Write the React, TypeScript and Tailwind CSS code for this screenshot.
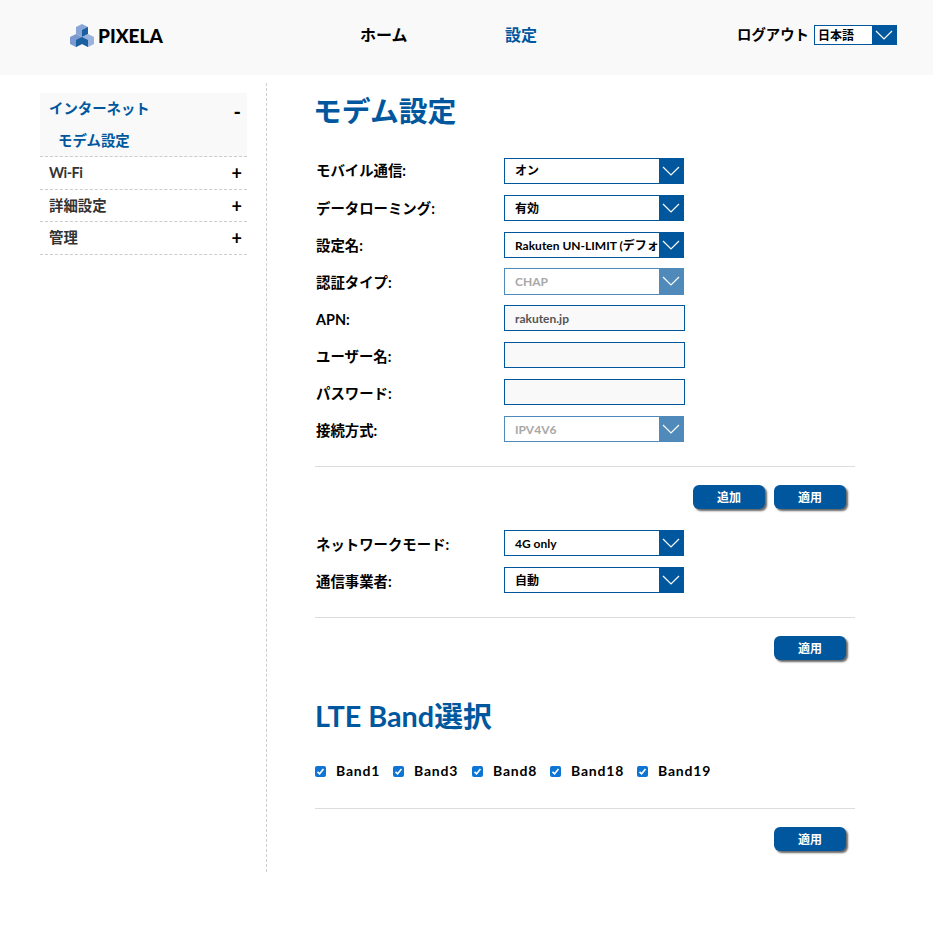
import React from "react";

const FONT = "font-['Lato','Noto_Sans_CJK_JP',sans-serif]";

function Chevron() {
  return (
    <svg width="18" height="10" viewBox="0 0 18 10" fill="none" stroke="#ffffff" strokeWidth="1.2">
      <path d="M1 1 L9 9 L17 1" />
    </svg>
  );
}

function Select({ text, disabled, tall, first }: { text: string; disabled?: boolean; tall?: boolean; first?: boolean }) {
  return (
    <div className={`flex ${tall ? "h-[27px]" : "h-[26px]"} w-[180px] items-stretch border ${disabled ? "border-[#4f8abb]" : "border-[#00579e]"}`}>
      <div className={`flex min-w-0 flex-1 items-center overflow-hidden whitespace-nowrap pl-[10px] ${first ? "" : "pt-[2px]"} text-[12px] font-bold ${disabled ? "text-[#a8a8a8]" : "text-black"}`}>
        {text}
      </div>
      <div className={`flex w-[24px] shrink-0 items-center justify-center ${disabled ? "bg-[#4f8abb]" : "bg-[#00579e]"}`}>
        <Chevron />
      </div>
    </div>
  );
}

function Input({ value }: { value?: string }) {
  return (
    <div className="flex h-[26px] w-[181px] items-center border border-[#00579e] bg-[#f9f9f9] pl-[10px] pt-[2px] text-[12px] font-bold text-[#555555]">
      {value}
    </div>
  );
}

function Row({ label, children, className, labelClass }: { label: string; children: React.ReactNode; className?: string; labelClass?: string }) {
  return (
    <div className={`flex h-[26px] items-center ${className ?? ""}`}>
      <div className={`w-[189px] pl-px text-[14.4px] font-bold text-black ${labelClass ?? "pt-[4px]"}`}>{label}</div>
      {children}
    </div>
  );
}

function Btn({ text }: { text: string }) {
  return (
    <div className="flex h-[24px] w-[72px] items-center justify-center rounded-[6px] bg-[#00579e] pt-[2px] text-[12px] font-bold text-white shadow-[2px_2px_2px_#666666]">
      {text}
    </div>
  );
}

function Side({ label, h, labelClass }: { label: string; h: string; labelClass?: string }) {
  return (
    <div className={`flex ${h} items-center justify-between border-b border-dashed border-[#cccccc] pl-[9px] pr-[5px] text-[14.4px] font-bold text-[#333333]`}>
      <span className={labelClass}>{label}</span>
      <span className="text-[18px] leading-none text-black">+</span>
    </div>
  );
}

function Band({ label, w }: { label: string; w: string }) {
  return (
    <label className={`flex items-center ${w}`}>
      <span className="flex h-[11px] w-[11px] items-center justify-center rounded-[2px] bg-[#0f75d4]">
        <svg width="9" height="9" viewBox="0 0 9 9" fill="none" stroke="#fff" strokeWidth="1.6">
          <path d="M1.5 4.8 L3.6 6.8 L7.5 2" />
        </svg>
      </span>
      <span className="ml-[10px] pb-[2px] text-[14px] font-bold tracking-[0.8px] text-black">{label}</span>
    </label>
  );
}

function Logo() {
  return (
    <div className="flex items-center">
      <svg width="24" height="23" viewBox="0 0 24 23">
        <path d="M12 0 L18 3 L18 10 L12 13 L6 10 L6 3 Z" fill="#8aa6d6" />
        <path d="M12 6 L18 3 L18 10 L12 13 Z" fill="#1a5fa0" />
        <path d="M6 10 L12 13 L12 20 L6 23 L0 20 L0 13 Z" fill="#7d9ad0" />
        <path d="M6 16 L12 13 L12 20 L6 23 Z" fill="#1a5fa0" />
        <path d="M18 10 L24 13 L24 20 L18 23 L12 20 L12 13 Z" fill="#9ab2de" />
        <path d="M12 13 L18 16 L18 23 L12 20 Z" fill="#1a5fa0" />
      </svg>
      <span className="ml-[4px] text-[19px] font-black leading-none text-black">PIXELA</span>
    </div>
  );
}

export default function App() {
  return (
    <div className={`${FONT} h-[938px] w-[933px] bg-white`}>
      <header className="flex h-[75px] items-center bg-[#f9f9f9] pb-[5px] pl-[70px]">
        <div className="w-[290px]"><Logo /></div>
        <div className="w-[145px] text-[16px] font-bold text-black">ホーム</div>
        <div className="w-[232px] text-[16px] font-bold text-[#00579e]">設定</div>
        <div className="text-[14.4px] font-bold text-black">ログアウト</div>
        <div className="ml-[5px] flex h-[20px] w-[83px] items-stretch border border-[#00579e] bg-white">
          <div className="flex flex-1 items-center pl-[3px] pt-[2px] text-[12px] font-bold text-black">日本語</div>
          <div className="flex w-[24px] items-center justify-center bg-[#00579e]"><Chevron /></div>
        </div>
      </header>

      <div className="flex pt-[8px]">
        <aside className="ml-[40px] w-[207px] pt-[10px]">
          <div className="h-[64px] border-b border-dashed border-[#cccccc] bg-[#f9f9f9]">
            <div className="flex h-[32px] items-center justify-between pl-[9px] pr-[6px]">
              <span className="text-[14.4px] font-bold text-[#00579e]">インターネット</span>
              <span className="pt-[3px] text-[20px] font-bold leading-none text-black">-</span>
            </div>
            <div className="pl-[18px] pt-[5px] text-[14.4px] font-bold text-[#00579e]">モデム設定</div>
          </div>
          <Side label="Wi-Fi" h="h-[33px]" labelClass="tracking-[-0.5px]" />
          <Side label="詳細設定" h="h-[32px]" />
          <Side label="管理" h="h-[33px]" />
        </aside>

        <div className="ml-[19px] h-[789px] border-l border-dashed border-[#cccccc]" />

        <main className="ml-[48px] w-[540px]">
          <h1 className="-ml-[2px] mt-[10px] h-[65px] text-[28.8px] font-bold leading-[36px] text-[#00579e]">モデム設定</h1>
          <div className="flex flex-col gap-[11px]">
            <Row label="モバイル通信:" labelClass="pt-0"><Select text="オン" first /></Row>
            <Row label="データローミング:" labelClass="pt-[2px]"><Select text="有効" /></Row>
            <Row label="設定名:" labelClass="pt-[2px]"><Select text="Rakuten UN-LIMIT (デフォルト)" /></Row>
            <Row label="認証タイプ:" className="-mt-px"><Select text="CHAP" disabled tall /></Row>
            <Row label="APN:"><Input value="rakuten.jp" /></Row>
            <Row label="ユーザー名:"><Input /></Row>
            <Row label="パスワード:"><Input /></Row>
            <Row label="接続方式:"><Select text="IPV4V6" disabled /></Row>
          </div>
          <div className="mt-[24px] border-t border-[#dddddd]" />
          <div className="mt-[18px] flex justify-end gap-[9px] pr-[9px]">
            <Btn text="追加" />
            <Btn text="適用" />
          </div>
          <div className="mt-[21px] flex flex-col gap-[11px]">
            <Row label="ネットワークモード:"><Select text="4G only" /></Row>
            <Row label="通信事業者:"><Select text="自動" /></Row>
          </div>
          <div className="mt-[24px] border-t border-[#dddddd]" />
          <div className="mt-[18px] flex justify-end pr-[9px]">
            <Btn text="適用" />
          </div>
          <h2 className="mt-[37px] text-[28.8px] font-bold leading-[38px] text-[#00579e]">LTE Band選択</h2>
          <div className="mt-[26px] flex h-[20px] items-center">
            <Band label="Band1" w="w-[78px]" />
            <Band label="Band3" w="w-[79px]" />
            <Band label="Band8" w="w-[78px]" />
            <Band label="Band18" w="w-[87px]" />
            <Band label="Band19" w="w-[90px]" />
          </div>
          <div className="mt-[27px] border-t border-[#dddddd]" />
          <div className="mt-[18px] flex justify-end pr-[9px]">
            <Btn text="適用" />
          </div>
        </main>
      </div>
    </div>
  );
}
